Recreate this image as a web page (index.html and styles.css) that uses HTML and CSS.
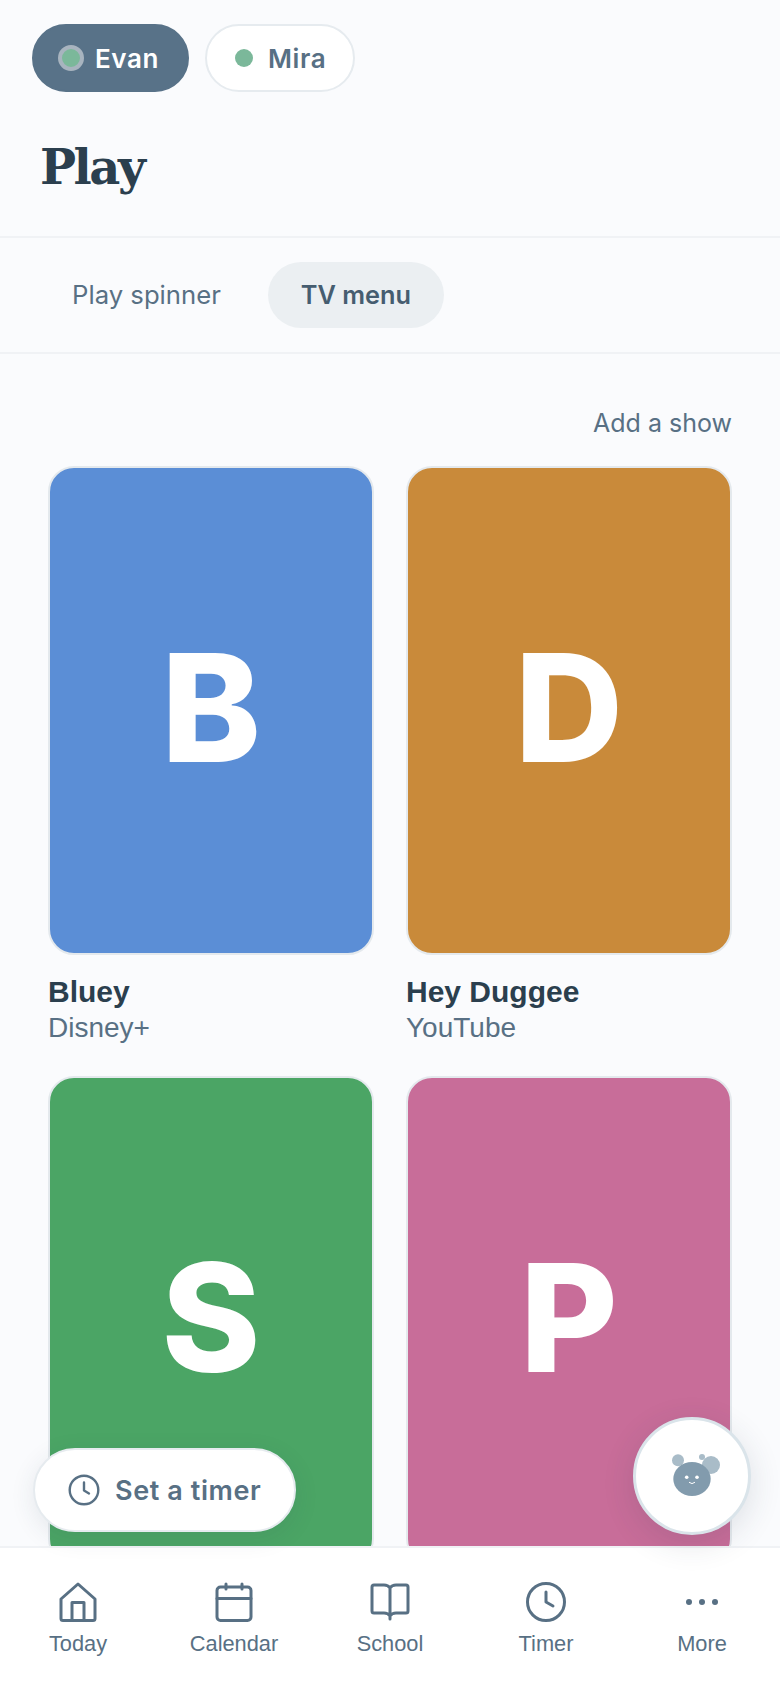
FILE: index.html
```html
<!DOCTYPE html>
<html lang="en">

<head>
    <meta charset='utf-8'>
    <meta name="viewport" content="width=device-width,initial-scale=1" />
    <title>Play</title>
    <link rel="stylesheet" href="styles.css">
</head>

<body>
    <div class="app">
        <main class="main">
            <div class="kids">
                <div class="kid kid-on"><span class="dot"></span>Evan</div>
                <div class="kid"><span class="dot"></span>Mira</div>
            </div>
            <h1 class="title">Play</h1>
            <div class="tabs">
                <div class="tab">Play spinner</div>
                <div class="tab tab-on">TV menu</div>
            </div>
            <div class="content">
                <div class="add">Add a show</div>
                <div class="shows">
                    <div class="show">
                        <div class="poster blue">B</div>
                        <div class="name">Bluey</div>
                        <div class="source">Disney+</div>
                    </div>
                    <div class="show">
                        <div class="poster orange">D</div>
                        <div class="name">Hey Duggee</div>
                        <div class="source">YouTube</div>
                    </div>
                    <div class="show">
                        <div class="poster green">S</div>
                    </div>
                    <div class="show">
                        <div class="poster pink">P</div>
                    </div>
                </div>
            </div>
        </main>
        <nav class="nav">
            <div class="nav-item">
                <svg viewBox="0 0 40 40" fill="none" stroke="currentColor" stroke-width="3" stroke-linejoin="round" stroke-linecap="round">
                    <path d="M20 2L37 17V36.500Q37 38.500 35 38.500H5Q3 38.500 3 36.500V17Z" />
                    <path d="M14 38.500V20.500H26V38.500" />
                </svg>
                Today
            </div>
            <div class="nav-item">
                <svg viewBox="0 0 40 40" fill="none" stroke="currentColor" stroke-width="3" stroke-linejoin="round" stroke-linecap="round">
                    <rect x="3" y="5" width="34" height="33.500" rx="3.500" />
                    <path d="M3 16.500H37M12 2V7M28 2V7" />
                </svg>
                Calendar
            </div>
            <div class="nav-item">
                <svg viewBox="0 0 40 40" fill="none" stroke="currentColor" stroke-width="3" stroke-linejoin="round" stroke-linecap="round">
                    <path d="M20 6Q18 3 14 3H4Q2 3 2 5V29Q2 31 4 31H14Q18 31 20 34Q22 31 26 31H36Q38 31 38 29V5Q38 3 36 3H26Q22 3 20 6ZM20 6V37" />
                </svg>
                School
            </div>
            <div class="nav-item">
                <svg viewBox="0 0 40 40" fill="none" stroke="currentColor" stroke-width="3" stroke-linejoin="round" stroke-linecap="round">
                    <circle cx="20" cy="20" r="18.500" />
                    <path d="M20 10V20L27 24" />
                </svg>
                Timer
            </div>
            <div class="nav-item">
                <svg viewBox="0 0 40 40" fill="currentColor">
                    <circle cx="7" cy="20" r="3" />
                    <circle cx="20" cy="20" r="3" />
                    <circle cx="33" cy="20" r="3" />
                </svg>
                More
            </div>
        </nav>
        <div class="timer">
            <svg class="timer-icon" viewBox="0 0 32 32" fill="none" stroke="currentColor" stroke-width="2.400" stroke-linecap="round" stroke-linejoin="round">
                <circle cx="16" cy="16" r="14.300" />
                <path d="M16 8.500V16.500L21 19.500" />
            </svg>
            Set a timer
        </div>
        <div class="bear">
            <svg viewBox="0 0 64 64" width="64" height="64">
                <circle cx="18" cy="16.300" r="6" fill="#a9bcc8" />
                <circle cx="51" cy="21" r="9" fill="#a9bcc8" />
                <circle cx="42" cy="13" r="3" fill="#a9bcc8" />
                <ellipse cx="32" cy="35" rx="18.700" ry="17" fill="#829bad" />
                <circle cx="26.700" cy="33.300" r="1.800" fill="#fff" />
                <circle cx="37" cy="33.300" r="1.800" fill="#fff" />
                <path d="M29.300 38.500Q32 41 34.700 38.500" fill="none" stroke="#fff" stroke-width="1" stroke-linecap="round" />
            </svg>
        </div>
    </div>
</body>

</html>
```

FILE: styles.css
```css
* {
    box-sizing: border-box;
}

html,
body {
    margin: 0;
    height: 100%;
}

body {
    background-color: #fafbfd;
    color: #587084;
    font-family: "Liberation Sans", Arial, sans-serif;
}

.app {
    position: relative;
    display: flex;
    flex-direction: column;
    height: 1688px;
    overflow: hidden;
}

.main {
    flex: 1;
    min-height: 0;
}

.kids {
    display: flex;
    gap: 16px;
    padding: 24px 32px 0;
}

.kid {
    display: flex;
    align-items: center;
    gap: 15px;
    height: 68px;
    padding: 0 27px 0 28px;
    border: 2px solid #e6ebef;
    border-radius: 34px;
    background-color: #fff;
    font-family: Inter, sans-serif;
    font-size: 26px;
    font-weight: 600;
    letter-spacing: 0.6px;
}

.kid .dot {
    width: 18px;
    height: 18px;
    border-radius: 50%;
    background-color: #7bb89a;
}

.kid-on {
    gap: 11px;
    padding: 0 28px 0 24px;
    border-color: #587288;
    background-color: #587288;
    color: #fff;
}

.kid-on .dot {
    width: 26px;
    height: 26px;
    border: 4px solid #a8b4bf;
}

.title {
    margin: 43px 0 0;
    padding-left: 40px;
    height: 101px;
    color: #2b3f4e;
    font-family: "DejaVu Serif", serif;
    font-size: 48px;
    font-weight: 700;
    letter-spacing: -2.500px;
    line-height: 64px;
}

.tabs {
    display: flex;
    gap: 31px;
    height: 118px;
    padding: 24px 32px 0;
    border-top: 2px solid #f0f2f5;
    border-bottom: 2px solid #f0f2f5;
}

.tab {
    display: flex;
    align-items: center;
    height: 66px;
    padding: 0 16px 2px 40px;
    border-radius: 33px;
    font-family: Inter, sans-serif;
    font-size: 25.700px;
}

.tab-on {
    padding: 0 33px 2px;
    background-color: #ebeff2;
    color: #465d70;
    font-size: 25.300px;
    font-weight: 600;
}

.content {
    padding: 0 48px;
}

.add {
    padding-top: 54px;
    height: 112px;
    font-family: Inter, sans-serif;
    font-size: 25px;
    line-height: 30px;
    text-align: right;
}

.shows {
    display: grid;
    grid-template-columns: 1fr 1fr;
    column-gap: 32px;
}

.show {
    height: 610px;
}

.poster {
    display: flex;
    align-items: center;
    justify-content: center;
    height: 489px;
    padding-bottom: 6px;
    border: 2px solid #e4e9ed;
    border-radius: 26px;
    color: #fff;
    font-family: Inter, sans-serif;
    font-size: 150px;
    font-weight: 800;
}

.blue {
    background-color: #5b8ed6;
}

.orange {
    background-color: #c98a3a;
}

.green {
    background-color: #4ba565;
}

.pink {
    background-color: #c86d99;
}

.name {
    margin-top: 20px;
    color: #2b3f4e;
    font-size: 30px;
    font-weight: 700;
    line-height: 34px;
}

.source {
    margin-top: 2px;
    font-size: 28px;
    line-height: 34px;
}

.timer {
    position: absolute;
    left: 33px;
    top: 1448px;
    display: flex;
    align-items: center;
    gap: 15px;
    width: 263px;
    height: 84px;
    padding-left: 33px;
    border: 2px solid #e6ebef;
    border-radius: 42px;
    background-color: #fff;
    box-shadow: 0 6px 24px rgba(40, 60, 80, 0.1);
    font-family: Inter, sans-serif;
    font-size: 27px;
    font-weight: 600;
    letter-spacing: 0.6px;
}

.timer-icon {
    width: 32px;
    height: 32px;
}

.bear {
    position: absolute;
    left: 633px;
    top: 1417px;
    display: flex;
    align-items: center;
    justify-content: center;
    width: 118px;
    height: 118px;
    border: 3px solid #dae4ea;
    border-radius: 50%;
    background-color: #fff;
    box-shadow: 0 8px 32px rgba(40, 60, 80, 0.14);
}

.nav {
    position: relative;
    display: grid;
    grid-template-columns: repeat(5, 1fr);
    height: 142px;
    border-top: 2px solid #f0f2f5;
    background-color: #fff;
}

.nav-item {
    display: flex;
    flex-direction: column;
    align-items: center;
    gap: 9px;
    padding-top: 34px;
    font-size: 21.800px;
    line-height: 26px;
}

.nav-item svg {
    width: 40px;
    height: 40px;
}
```
